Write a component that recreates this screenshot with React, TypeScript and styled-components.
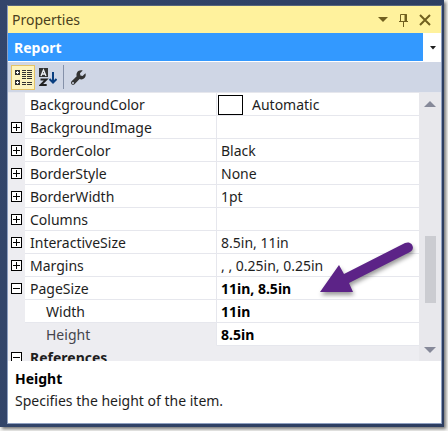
import React from "react";
import styled, { createGlobalStyle } from "styled-components";

const GlobalStyle = createGlobalStyle`
  * { box-sizing: border-box; }
  body { margin: 0; background: #f4f4f2; }
  body, button, select { font-family: "Noto Sans", "Open Sans", sans-serif; font-size: 14px; }
  button, select { border: 0; border-radius: 0; padding: 0; background: none; color: inherit; }
`;

const Desktop = styled.div`
  height: 100vh;
  padding: 0 4px 4px 0;
`;

const Frame = styled.div`
  height: 100%;
  padding: 5px 2px 3px 7px;
  background: linear-gradient(100deg, #33466b 0%, #2c3d60 100%);
  box-shadow: 2px 2px 3px #777777;
`;

const Panel = styled.section`
  display: flex;
  flex-direction: column;
  height: 100%;
  border: 1px solid #8e9fc0;
  border-top-color: #56657c;
  background: #ffffff;
  color: #1e1e1e;
`;

const TitleBar = styled.header`
  display: flex;
  align-items: center;
  height: 27px;
  flex: none;
  padding: 0 6px 0 4px;
  background: #fff29d;
  color: #4a401c;
`;

const Title = styled.h1`
  flex: 1;
  margin: 0;
  font-size: 14px;
  font-weight: 400;
`;

const TitleButton = styled.button`
  display: flex;
  align-items: center;
  justify-content: center;
  width: 21px;
  height: 20px;
`;

const ObjectPicker = styled.div`
  position: relative;
  flex: none;
  height: 28px;
`;

const ObjectSelect = styled.select`
  display: block;
  width: 100%;
  height: 28px;
  padding: 0 22px 0 6px;
  appearance: none;
  background: linear-gradient(#3399ff, #3399ff) 0 0 / calc(100% - 18px) 100% no-repeat #ffffff;
  color: #ffffff;
  font-size: 14px;
  font-weight: 700;
`;

const PickerCaret = styled.svg`
  position: absolute;
  right: 5px;
  top: 13px;
  pointer-events: none;
`;

const Toolbar = styled.div`
  display: flex;
  align-items: center;
  flex: none;
  height: 31px;
  padding: 0 3px;
  border-top: 1px solid #ffffff;
  background: #cfd6e5;
`;

const ToolButton = styled.button<{ $active?: boolean }>`
  display: flex;
  align-items: center;
  justify-content: center;
  width: ${(p) => (p.$active ? 24 : 26)}px;
  height: 25px;
  border: 1px solid ${(p) => (p.$active ? "#e5c365" : "transparent")};
  background: ${(p) => (p.$active ? "#fdf4bf" : "transparent")};
`;

const Divider = styled.span`
  width: 1px;
  height: 24px;
  margin: 0 1px 0 2px;
  background: #8591a9;
`;

const Body = styled.div`
  position: relative;
  display: flex;
  flex: 1;
  min-height: 0;
  border-top: 1px solid #e6e7ed;
`;

const Viewport = styled.div`
  flex: 1;
  overflow: hidden;
  background: #ededf1;
`;

const Table = styled.table`
  width: 100%;
  table-layout: fixed;
  border-collapse: separate;
  border-spacing: 0;
`;

const Gutter = styled.td`
  width: 17px;
  height: 23px;
  padding: 0;
  background: #ededf1;
`;

const NameCell = styled.th<{ $child?: boolean; $selected?: boolean; $category?: boolean }>`
  width: 192px;
  height: 23px;
  padding: 2px 0 0 ${(p) => (p.$child ? 21 : 5)}px;
  border-right: ${(p) => (p.$category ? "0" : "1px solid #e6e7ed")};
  border-bottom: 1px solid ${(p) => (p.$selected || p.$category ? "#ededf1" : "#e6e7ed")};
  background: ${(p) => (p.$selected || p.$category ? "#ededf1" : "#ffffff")};
  color: ${(p) => (p.$selected ? "#44454c" : "#1e1e1e")};
  font-weight: ${(p) => (p.$category ? 700 : 400)};
  line-height: 20px;
  text-align: left;
  white-space: nowrap;
`;

const ValueCell = styled.td<{ $bold?: boolean }>`
  height: 23px;
  padding: 2px 0 0 4px;
  border-bottom: 1px solid #e6e7ed;
  background: #ffffff;
  color: ${(p) => (p.$bold ? "#000000" : "#1e1e1e")};
  font-weight: ${(p) => (p.$bold ? 700 : 400)};
  line-height: 20px;
  white-space: nowrap;
`;

const ColorValue = styled.span`
  display: flex;
  align-items: center;
  gap: 9px;
  height: 20px;
`;

const Swatch = styled.span`
  width: 25px;
  height: 20px;
  margin-left: -3px;
  border: 1px solid #000000;
  background: #ffffff;
`;

const Expander = styled.button`
  display: block;
  width: 11px;
  height: 11px;
  margin-left: 3px;
  svg { display: block; }
`;

const ScrollBar = styled.div`
  display: flex;
  flex-direction: column;
  align-items: center;
  flex: none;
  width: 22px;
  background: #e8e8ec;
`;

const ScrollButton = styled.button`
  display: flex;
  align-items: center;
  justify-content: center;
  width: 22px;
  height: 22px;
  flex: none;
`;

const Track = styled.div`
  display: flex;
  flex-direction: column;
  align-items: center;
  flex: 1;
  width: 100%;
`;

const Space = styled.span<{ $grow: number }>`
  flex: ${(p) => p.$grow};
`;

const Thumb = styled.span`
  flex: 67;
  width: 11px;
  background: #cbccd1;
`;

const Pointer = styled.svg`
  position: absolute;
  right: 22px;
  top: 144px;
  pointer-events: none;
  filter: drop-shadow(1px 3px 2px rgba(0, 0, 0, 0.4));
`;

const Description = styled.footer`
  flex: none;
  min-height: 62px;
  padding: 7px 7px 11px;
  color: #1e1e1e;
`;

const DescriptionTitle = styled.h2`
  margin: 0;
  color: #000000;
  font-size: 14px;
  line-height: 22px;
`;

const DescriptionText = styled.p`
  margin: 0;
  line-height: 22px;
`;

type Property = {
  name: string;
  value?: string;
  state?: "open" | "closed";
  bold?: boolean;
  child?: boolean;
  selected?: boolean;
  category?: boolean;
  swatch?: boolean;
};

const properties: Property[] = [
  { name: "BackgroundColor", value: "Automatic", swatch: true },
  { name: "BackgroundImage", state: "closed" },
  { name: "BorderColor", value: "Black", state: "closed" },
  { name: "BorderStyle", value: "None", state: "closed" },
  { name: "BorderWidth", value: "1pt", state: "closed" },
  { name: "Columns", state: "closed" },
  { name: "InteractiveSize", value: "8.5in, 11in", state: "closed" },
  { name: "Margins", value: ", , 0.25in, 0.25in", state: "closed" },
  { name: "PageSize", value: "11in, 8.5in", state: "open", bold: true },
  { name: "Width", value: "11in", bold: true, child: true },
  { name: "Height", value: "8.5in", bold: true, child: true, selected: true },
  { name: "References", state: "open", category: true },
];

function PropertyRow({ item }: { item: Property }) {
  return (
    <tr>
      <Gutter>
        {item.state && (
          <Expander aria-label={`${item.state === "open" ? "Collapse" : "Expand"} ${item.name}`}>
            <svg width="11" height="11" shapeRendering="crispEdges">
              <path
                d={item.state === "open" ? "M.5.5h10v10h-10zM2 5.5h7" : "M.5.5h10v10h-10zM2 5.5h7M5.5 2v7"}
                fill="#fff"
                stroke="#000"
              />
            </svg>
          </Expander>
        )}
      </Gutter>
      <NameCell
        scope="row"
        colSpan={item.category ? 2 : 1}
        $child={item.child}
        $selected={item.selected}
        $category={item.category}
      >
        {item.name}
      </NameCell>
      {!item.category && (
        <ValueCell $bold={item.bold}>
          {item.swatch ? (
            <ColorValue>
              <Swatch />
              {item.value}
            </ColorValue>
          ) : (
            item.value
          )}
        </ValueCell>
      )}
    </tr>
  );
}

export default function App() {
  return (
    <Desktop>
      <GlobalStyle />
      <Frame>
        <Panel>
          <TitleBar>
            <Title>Properties</Title>
            <TitleButton aria-label="Window position">
              <svg width="10" height="6"><path d="M0 0h10L5 5z" fill="#71601f" /></svg>
            </TitleButton>
            <TitleButton aria-label="Auto hide">
              <svg width="11" height="14" fill="none" stroke="#71601f">
                <path d="M2.5 8V1.5h6V8M1 8.5h9M5.5 9v5" />
                <path d="M7.5 1v7" strokeWidth="2" />
              </svg>
            </TitleButton>
            <TitleButton aria-label="Close">
              <svg width="12" height="12"><path d="M1 1l10 10M11 1L1 11" stroke="#71601f" strokeWidth="2" /></svg>
            </TitleButton>
          </TitleBar>
          <ObjectPicker>
            <ObjectSelect aria-label="Object" defaultValue="Report">
              <option>Report</option>
            </ObjectSelect>
            <PickerCaret width="6" height="4"><path d="M0 0h6L3 3.5z" fill="#1e1e1e" /></PickerCaret>
          </ObjectPicker>
          <Toolbar>
            <ToolButton $active aria-label="Categorized">
              <svg width="18" height="18" fill="none" stroke="#333">
                <path d="M1 2h5v5H1zM1 12h5v5H1z" fill="#333" stroke="none" />
                <path d="M2 4.5h3M3.5 3v3M2 14.5h3M3.5 13v3" stroke="#fff" />
                <path d="M8 2.5h4M13 2.5h5M8 4.5h4M13 4.5h5M8 6.5h4M13 6.5h5M8 8.5h4M13 8.5h5M8 10.5h4M13 10.5h5M8 14.5h4M13 14.5h5M8 16.5h4M13 16.5h5" />
              </svg>
            </ToolButton>
            <ToolButton aria-label="Alphabetical">
              <svg width="18" height="19" fill="none">
                <path d="M0 0h9v9H0z" fill="#333" />
                <path d="M2 8l2.5-6L7 8M3 6h3" stroke="#eef0f5" strokeWidth="1.3" />
                <path d="M1.5 11.5h5.8L1.7 17h6" stroke="#222" strokeWidth="2" />
                <path d="M14 4v10M10.5 11l3.5 3.5 3.5-3.5" stroke="#0a3f80" strokeWidth="2" />
              </svg>
            </ToolButton>
            <Divider />
            <ToolButton aria-label="Property pages">
              <svg width="15" height="15">
                <path d="M14.4 3.2l-2.8 2.7-2.2-.5L9 3.2 11.7.5C9.7-.2 7.4.4 6.2 2.2 5.4 3.4 5.2 4.9 5.7 6.2L.6 11.3c-.8.8-.8 2.1 0 2.9s2.1.8 2.9 0l5.1-5.1c2.1.8 4.5-.1 5.6-2 .6-1.2.7-2.6.2-3.9zM2 11.9a1 1 0 1 1 0 2 1 1 0 0 1 0-2z" fill="#333" />
              </svg>
            </ToolButton>
          </Toolbar>
          <Body>
            <Viewport>
              <Table aria-label="Report properties">
                <colgroup>
                  <col width="17" />
                  <col width="192" />
                  <col />
                </colgroup>
                <tbody>
                  {properties.map((item) => (
                    <PropertyRow key={item.name} item={item} />
                  ))}
                </tbody>
              </Table>
            </Viewport>
            <ScrollBar>
              <ScrollButton aria-label="Scroll up">
                <svg width="12" height="6"><path d="M0 6l6-6 6 6z" fill="#868999" /></svg>
              </ScrollButton>
              <Track>
                <Space $grow={121} />
                <Thumb />
                <Space $grow={36} />
              </Track>
              <ScrollButton aria-label="Scroll down">
                <svg width="12" height="6"><path d="M0 0h12L6 6z" fill="#868999" /></svg>
              </ScrollButton>
            </ScrollBar>
            <Pointer width="100" height="60">
              <path d="M1 55L20 28l5 9L86 6c7-3 11 6 5 9L30 46l4 9z" fill="#5c2387" />
            </Pointer>
          </Body>
          <Description>
            <DescriptionTitle>Height</DescriptionTitle>
            <DescriptionText>Specifies the height of the item.</DescriptionText>
          </Description>
        </Panel>
      </Frame>
    </Desktop>
  );
}
